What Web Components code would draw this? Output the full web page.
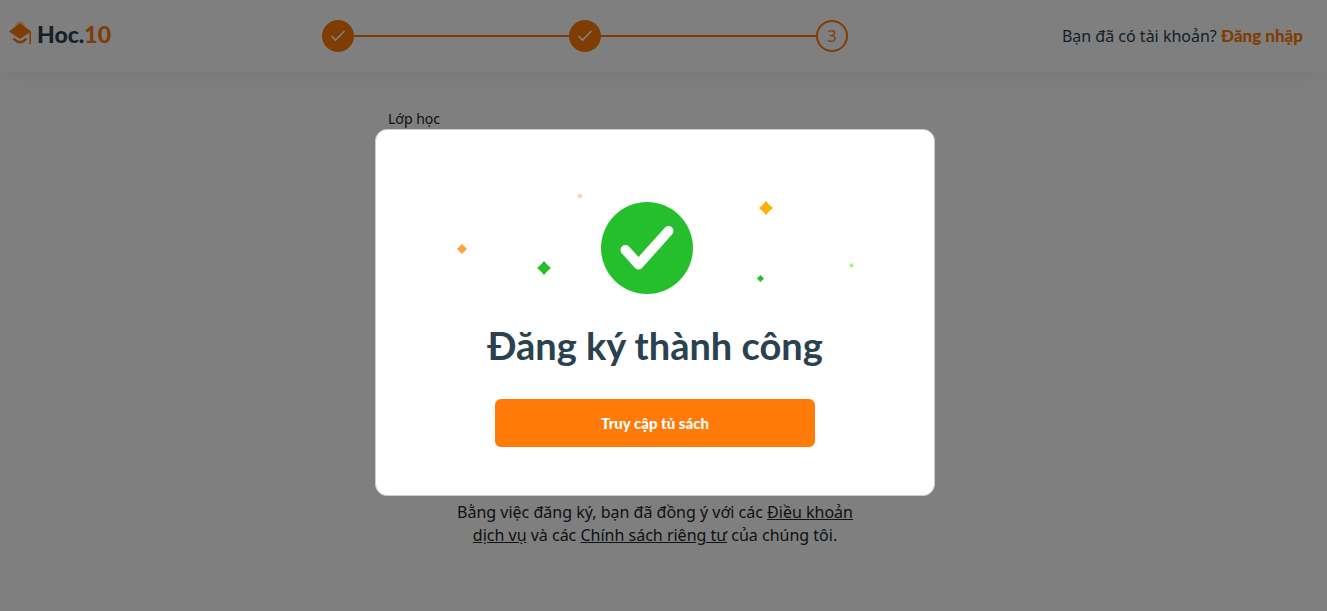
<!DOCTYPE html>
<html lang="vi">
<head>
<meta charset="utf-8">
<meta name="viewport" content="width=device-width, initial-scale=1">
<title>Hoc.10 - Đăng ký</title>
<style>
  :root {
    --orange: #ff7a08;
    --ink: #2a4150;
    --display: Lato, "Noto Sans", sans-serif;
    --gutter: 17px;
  }
  body {
    margin: 0;
    font: 400 16px/23px "Noto Sans", "Open Sans", sans-serif;
    color: #212529;
    background: #fff;
  }
</style>
</head>
<body>
<signup-page></signup-page>

<template id="t-page">
  <style>
    :host { display: flex; flex-direction: column; min-height: 100vh; }
  </style>
  <site-header></site-header>
  <class-form></class-form>
  <success-dialog heading="Đăng ký thành công" action="Truy cập tủ sách"></success-dialog>
</template>

<template id="t-header">
  <style>
    :host { display: block; background: #fff; box-shadow: 0 4px 20px rgba(0, 0, 0, .06); }
    header {
      display: grid;
      grid-template-columns: 313fr 526fr 455fr;
      align-items: center;
      height: 72px;
      padding: 0 24px 0 9px;
    }
    p { margin: 0; justify-self: end; color: var(--ink); white-space: nowrap; }
    p a { color: var(--orange); font: 900 17px/22px var(--display); text-decoration: none; }
  </style>
  <header>
    <brand-logo></brand-logo>
    <step-track current="3" total="3"></step-track>
    <p>Bạn đã có tài khoản? <a href="#login">Đăng nhập</a></p>
  </header>
</template>

<template id="t-logo">
  <style>
    :host { display: block; }
    a { display: inline-flex; align-items: center; gap: 6px; color: var(--ink); text-decoration: none; font: 900 23px/30px var(--display); }
    svg { display: block; }
    b { color: var(--orange); font-weight: 900; }
  </style>
  <a href="#home">
    <svg width="22" height="28" viewBox="0 0 22 28" aria-hidden="true">
      <circle cx="11" cy="6" r="5" fill="#ff7a08" opacity=".25"/>
      <path d="M11 3 22 11.500 11 19 0 11.500Z" fill="#ff7a08"/>
      <path d="M21.200 11.500V24" stroke="#ff7a08" stroke-width="1.600"/>
      <path d="M4.500 18.500Q11 26 17.500 18.500" fill="none" stroke="#ff7a08" stroke-width="2.600"/>
    </svg>
    <span>Hoc.<b>10</b></span>
  </a>
</template>

<template id="t-steps">
  <style>
    :host { display: block; }
    ol { display: flex; align-items: center; margin: 0; padding: 0; list-style: none; }
    li { display: flex; align-items: center; }
    li + li { flex: 1; }
    li + li::before { content: ""; flex: 1; height: 2px; background: var(--orange); }
    .dot {
      box-sizing: border-box;
      display: grid;
      place-items: center;
      width: 32px;
      height: 32px;
      border: 2px solid var(--orange);
      border-radius: 50%;
      color: var(--orange);
    }
    .done { background: var(--orange); }
  </style>
  <ol></ol>
</template>

<template id="t-form">
  <style>
    :host { display: block; flex: 1; padding: 36px var(--gutter) 60px 0; }
    main { display: flex; flex-direction: column; gap: 371px; max-width: 560px; margin: 0 auto; }
    h2 { margin: 0; padding-left: 13px; font-size: 14px; font-weight: 400; line-height: 22px; }
    p { max-width: 400px; margin: 0 auto; text-align: center; }
    a { color: inherit; }
  </style>
  <main>
    <h2>Lớp học</h2>
    <p>Bằng việc đăng ký, bạn đã đồng ý với các <a href="#terms">Điều khoản dịch vụ</a> và các <a href="#privacy">Chính sách riêng tư</a> của chúng tôi.</p>
  </main>
</template>

<template id="t-dialog">
  <style>
    :host {
      position: fixed;
      inset: 0;
      display: flex;
      justify-content: center;
      align-items: center;
      padding: 14px var(--gutter) 0 0;
      background: rgba(0, 0, 0, .5);
    }
    section {
      box-sizing: border-box;
      display: flex;
      flex-direction: column;
      align-items: center;
      width: 560px;
      max-width: 100%;
      padding: 56px 24px 48px;
      border: 1px solid #ccc;
      border-radius: 12px;
      background: #fff;
    }
    svg { display: block; max-width: 100%; }
    h1 { margin: 21px 0 30px; color: var(--ink); font: 700 38px/48px var(--display); white-space: nowrap; }
    button {
      width: 320px;
      max-width: 100%;
      height: 48px;
      padding: 0;
      border: 0;
      border-radius: 6px;
      background: var(--orange);
      color: #fff;
      font: 900 15px/22px var(--display);
      cursor: pointer;
    }
  </style>
  <section role="dialog" aria-modal="true" aria-labelledby="title">
    <svg width="400" height="114" viewBox="455 186 400 114" aria-hidden="true">
      <circle cx="647" cy="248" r="46" fill="#25bf2e"/>
      <path d="M625.500 250 638.500 264.500 668.500 231" fill="none" stroke="#fff" stroke-width="10" stroke-linecap="round" stroke-linejoin="round"/>
      <path d="M544 261Q547 265 551 268 547 271 544 275 541 271 537 268 541 265 544 261Z" fill="#25bf2e"/>
      <path d="M766 201Q769 205 773 208 769 211 766 215 763 211 759 208 763 205 766 201Z" fill="#ffb100"/>
      <path d="M462 244 467 249 462 254 457 249Z" fill="#ffa043"/>
      <path d="M760.500 275 764 278.500 760.500 282 757 278.500Z" fill="#25bf2e"/>
      <path d="M580 193 583 196 580 199 577 196Z" fill="#ffd7a8"/>
      <path d="M851.500 263 854 265.500 851.500 268 849 265.500Z" fill="#8dff70"/>
    </svg>
    <h1 id="title"></h1>
    <button type="button"></button>
  </section>
</template>

<script>
  class Block extends HTMLElement {
    connectedCallback() {
      if (this.shadowRoot) return;
      const root = this.attachShadow({ mode: 'open' });
      root.append(document.getElementById(this.constructor.template).content.cloneNode(true));
      this.render(root);
    }
    render() {}
  }

  customElements.define('brand-logo', class extends Block { static template = 't-logo'; });

  customElements.define('step-track', class extends Block {
    static template = 't-steps';
    render(root) {
      const current = Number(this.getAttribute('current'));
      const total = Number(this.getAttribute('total'));
      const check = '<svg width="16" height="12" viewBox="0 0 16 12" aria-hidden="true"><path d="M1.500 6 5.500 10 14.500 1" fill="none" stroke="#fff" stroke-width="1.600"/></svg>';
      let items = '';
      for (let i = 1; i <= total; i++) {
        items += i < current
          ? `<li><span class="dot done">${check}</span></li>`
          : `<li aria-current="step"><span class="dot">${i}</span></li>`;
      }
      root.querySelector('ol').innerHTML = items;
    }
  });

  customElements.define('site-header', class extends Block { static template = 't-header'; });
  customElements.define('class-form', class extends Block { static template = 't-form'; });

  customElements.define('success-dialog', class extends Block {
    static template = 't-dialog';
    render(root) {
      root.querySelector('h1').textContent = this.getAttribute('heading');
      const button = root.querySelector('button');
      button.textContent = this.getAttribute('action');
      button.addEventListener('click', () => this.remove());
    }
  });

  customElements.define('signup-page', class extends Block { static template = 't-page'; });
</script>
</body>
</html>
